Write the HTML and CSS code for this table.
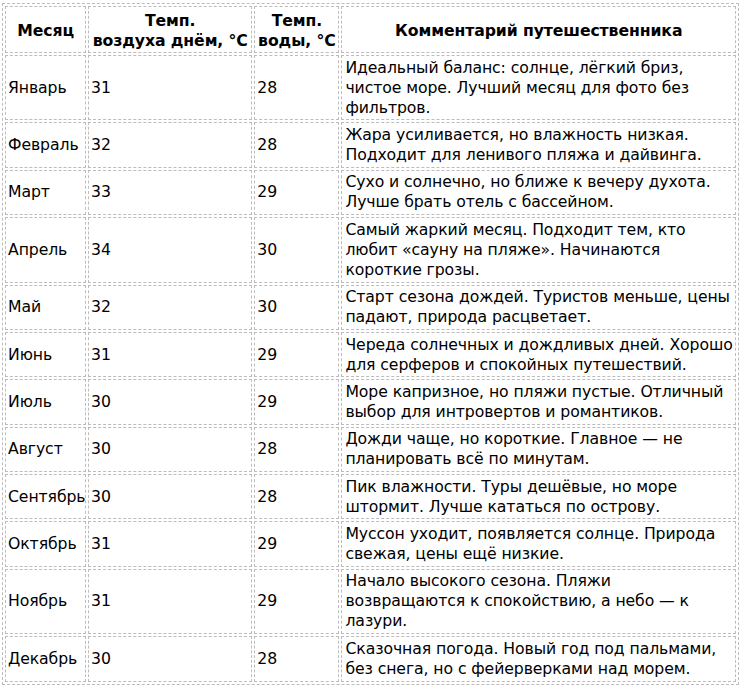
FILE: index.html
```html
<!DOCTYPE html>
<html lang="ru">
<head>
<meta charset="utf-8">
<title>Погода по месяцам</title>
<link rel="stylesheet" href="styles.css">
</head>
<body>
<table class="climate">
  <colgroup>
    <col class="c-month">
    <col class="c-air">
    <col class="c-water">
    <col class="c-note">
  </colgroup>
  <thead>
    <tr>
      <th>Месяц</th>
      <th>Темп.<br>воздуха днём, °C</th>
      <th>Темп.<br>воды, °C</th>
      <th>Комментарий путешественника</th>
    </tr>
  </thead>
  <tbody>
    <tr><td>Январь</td><td>31</td><td>28</td><td class="note">Идеальный баланс: солнце, лёгкий бриз,<br>чистое море. Лучший месяц для фото без<br>фильтров.</td></tr>
    <tr><td>Февраль</td><td>32</td><td>28</td><td class="note">Жара усиливается, но влажность низкая.<br>Подходит для ленивого пляжа и дайвинга.</td></tr>
    <tr><td>Март</td><td>33</td><td>29</td><td class="note">Сухо и солнечно, но ближе к вечеру духота.<br>Лучше брать отель с бассейном.</td></tr>
    <tr><td>Апрель</td><td>34</td><td>30</td><td class="note">Самый жаркий месяц. Подходит тем, кто<br>любит «сауну на пляже». Начинаются<br>короткие грозы.</td></tr>
    <tr><td>Май</td><td>32</td><td>30</td><td class="note">Старт сезона дождей. Туристов меньше, цены<br>падают, природа расцветает.</td></tr>
    <tr><td>Июнь</td><td>31</td><td>29</td><td class="note">Череда солнечных и дождливых дней. Хорошо<br>для серферов и спокойных путешествий.</td></tr>
    <tr><td>Июль</td><td>30</td><td>29</td><td class="note">Море капризное, но пляжи пустые. Отличный<br>выбор для интровертов и романтиков.</td></tr>
    <tr><td>Август</td><td>30</td><td>28</td><td class="note">Дожди чаще, но короткие. Главное — не<br>планировать всё по минутам.</td></tr>
    <tr><td>Сентябрь</td><td>30</td><td>28</td><td class="note">Пик влажности. Туры дешёвые, но море<br>штормит. Лучше кататься по острову.</td></tr>
    <tr><td>Октябрь</td><td>31</td><td>29</td><td class="note">Муссон уходит, появляется солнце. Природа<br>свежая, цены ещё низкие.</td></tr>
    <tr><td>Ноябрь</td><td>31</td><td>29</td><td class="note">Начало высокого сезона. Пляжи<br>возвращаются к спокойствию, а небо — к<br>лазури.</td></tr>
    <tr><td>Декабрь</td><td>30</td><td>28</td><td class="note">Сказочная погода. Новый год под пальмами,<br>без снега, но с фейерверками над морем.</td></tr>
  </tbody>
</table>
</body>
</html>
```
FILE: styles.css
```css
html, body {
  margin: 0;
  padding: 0;
  background: #fff;
}

body {
  font-family: "DejaVu Sans", Verdana, sans-serif;
  font-size: 15.7px;
  letter-spacing: -0.1px;
  line-height: 20px;
  color: #000;
}

.climate {
  margin: 3px 0 0 2px;
  width: 737px;
  table-layout: fixed;
  border: 1px dashed #bcbcbc;
  border-collapse: separate;
  border-spacing: 2px;
}

.c-month { width: 81px; }
.c-air { width: 164px; }
.c-water { width: 85px; }
.c-note { width: 394px; }

.climate th,
.climate td {
  box-sizing: border-box;
  border: 1px dashed #bcbcbc;
  padding: 1.7px 2px 1.7px 2px;
  vertical-align: middle;
  text-align: left;
  white-space: nowrap;
}

.climate th {
  font-weight: bold;
  text-align: center;
  padding-top: 3.5px;
  padding-bottom: 1.5px;
}

.climate td.note {
  padding-left: 3px;
}
```
